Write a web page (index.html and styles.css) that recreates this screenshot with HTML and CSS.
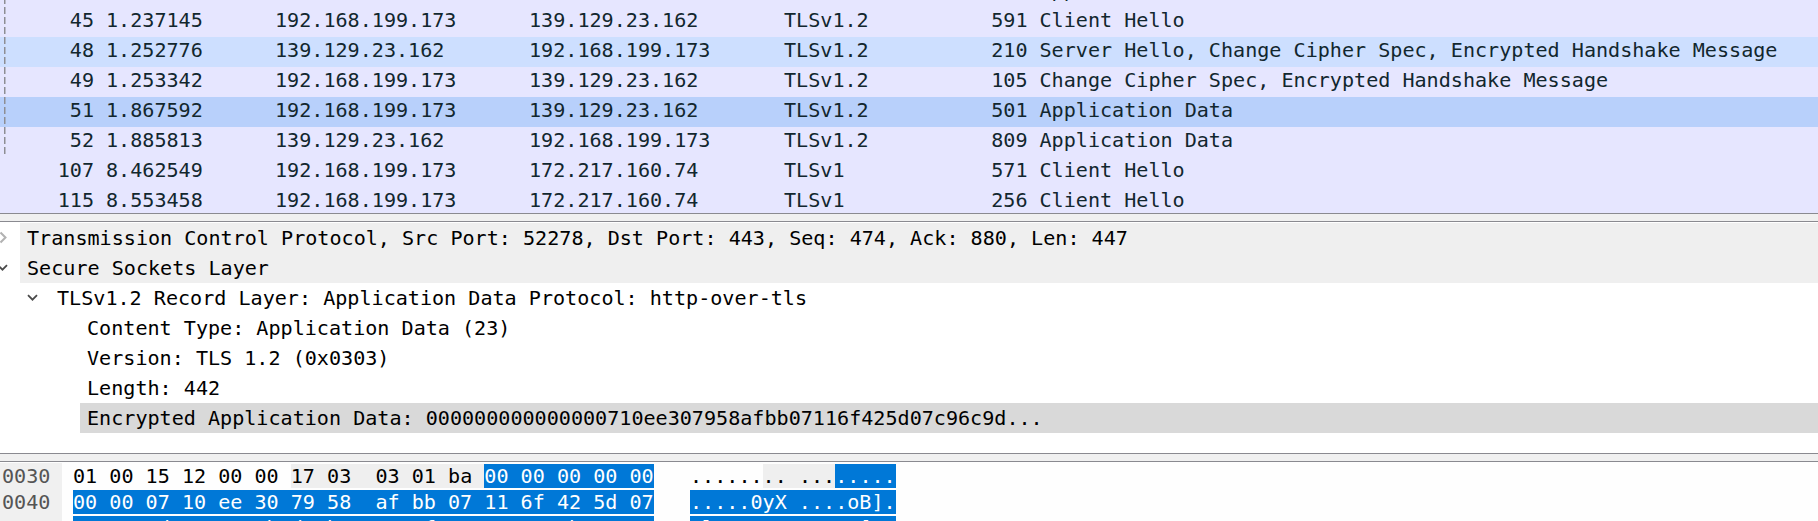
FILE: index.html
```html
<!DOCTYPE html>
<html>
<head>
<meta charset="utf-8">
<link rel="stylesheet" href="styles.css">
</head>
<body>
<div class="app">
  <div class="plist">
    <div class="prow first rel"><span class="c-no">44</span><span class="c-time">1.236617</span><span class="c-src">139.129.23.162</span><span class="c-dst">192.168.199.173</span><span class="c-proto">TLSv1.2</span><span class="c-len">115</span><span class="c-info">Application Data</span></div>
    <div class="prow rel"><span class="c-no">45</span><span class="c-time">1.237145</span><span class="c-src">192.168.199.173</span><span class="c-dst">139.129.23.162</span><span class="c-proto">TLSv1.2</span><span class="c-len">591</span><span class="c-info">Client Hello</span></div>
    <div class="prow rel hover"><span class="c-no">48</span><span class="c-time">1.252776</span><span class="c-src">139.129.23.162</span><span class="c-dst">192.168.199.173</span><span class="c-proto">TLSv1.2</span><span class="c-len">210</span><span class="c-info">Server Hello, Change Cipher Spec, Encrypted Handshake Message</span></div>
    <div class="prow rel"><span class="c-no">49</span><span class="c-time">1.253342</span><span class="c-src">192.168.199.173</span><span class="c-dst">139.129.23.162</span><span class="c-proto">TLSv1.2</span><span class="c-len">105</span><span class="c-info">Change Cipher Spec, Encrypted Handshake Message</span></div>
    <div class="prow rel sel"><span class="c-no">51</span><span class="c-time">1.867592</span><span class="c-src">192.168.199.173</span><span class="c-dst">139.129.23.162</span><span class="c-proto">TLSv1.2</span><span class="c-len">501</span><span class="c-info">Application Data</span></div>
    <div class="prow rel"><span class="c-no">52</span><span class="c-time">1.885813</span><span class="c-src">139.129.23.162</span><span class="c-dst">192.168.199.173</span><span class="c-proto">TLSv1.2</span><span class="c-len">809</span><span class="c-info">Application Data</span></div>
    <div class="prow"><span class="c-no">107</span><span class="c-time">8.462549</span><span class="c-src">192.168.199.173</span><span class="c-dst">172.217.160.74</span><span class="c-proto">TLSv1</span><span class="c-len">571</span><span class="c-info">Client Hello</span></div>
    <div class="prow"><span class="c-no">115</span><span class="c-time">8.553458</span><span class="c-src">192.168.199.173</span><span class="c-dst">172.217.160.74</span><span class="c-proto">TLSv1</span><span class="c-len">256</span><span class="c-info">Client Hello</span></div>
  </div>
  <div class="split"></div>
  <div class="details">
    <div class="trow shade">
      <span class="tog"><svg class="chev-r" width="8" height="13" viewBox="0 0 8 13"><path d="M1.5 1.5 L6.5 6.5 L1.5 11.5" fill="none" stroke="#b2b2b2" stroke-width="2"/></svg></span>
      <span class="lbl">Transmission Control Protocol, Src Port: 52278, Dst Port: 443, Seq: 474, Ack: 880, Len: 447</span>
    </div>
    <div class="trow shade">
      <span class="tog"><svg class="chev-d" width="11" height="7" viewBox="0 0 11 7"><path d="M1 1.2 L5.5 5.7 L10 1.2" fill="none" stroke="#4a4a4a" stroke-width="1.8"/></svg></span>
      <span class="lbl">Secure Sockets Layer</span>
    </div>
    <div class="trow lv1">
      <span class="tog"><svg class="chev-d" width="11" height="7" viewBox="0 0 11 7"><path d="M1 1.2 L5.5 5.7 L10 1.2" fill="none" stroke="#4a4a4a" stroke-width="1.8"/></svg></span>
      <span class="lbl">TLSv1.2 Record Layer: Application Data Protocol: http-over-tls</span>
    </div>
    <div class="trow lv2"><span class="tog"></span><span class="lbl">Content Type: Application Data (23)</span></div>
    <div class="trow lv2"><span class="tog"></span><span class="lbl">Version: TLS 1.2 (0x0303)</span></div>
    <div class="trow lv2"><span class="tog"></span><span class="lbl">Length: 442</span></div>
    <div class="trow lv2 cur"><span class="tog"></span><span class="lbl">Encrypted Application Data: 000000000000000710ee307958afbb07116f425d07c96c9d...</span></div>
  </div>
  <div class="split"></div>
  <div class="hex">
    <div class="hrow"><span class="off">0030</span><span class="bytes">01 00 15 12 00 00 <span class="hl-g">17 03  03 01 ba </span><span class="hl-b">00 00 00 00 00</span>   ......<span class="hl-g">.. ...</span><span class="hl-b">.....</span></span></div>
    <div class="hrow"><span class="off">0040</span><span class="bytes"><span class="hl-b">00 00 07 10 ee 30 79 58  af bb 07 11 6f 42 5d 07</span>   <span class="hl-b">.....0yX ....oB].</span></span></div>
    <div class="hrow"><span class="off">0050</span><span class="bytes"><span class="hl-b">c9 6c 9d 4e 21 8b d3 b6  0a 1f 77 c4 9e 5b 2a 31</span>   <span class="hl-b">.l.N!... ..w..[*1</span></span></div>
  </div>
</div>
</body>
</html>
```

FILE: styles.css
```css
html, body {
  margin: 0;
  padding: 0;
}
body {
  width: 1818px;
  height: 521px;
  overflow: hidden;
  background: #ffffff;
  font-family: "DejaVu Sans Mono", "Liberation Mono", monospace;
  font-size: 20.1px;
  color: #000000;
}
.app {
  display: flex;
  flex-direction: column;
  height: 521px;
}

/* packet list */
.plist {
  flex: none;
  height: 213px;
  overflow: hidden;
  background: #e6e6ff;
  color: #12272e;
}
.prow {
  display: flex;
  height: 30px;
  line-height: 27px;
  white-space: pre;
}
.prow.first {
  margin-top: -23.3px;
}
.prow.hover {
  background: #cddfff;
}
.prow.sel {
  background: #b8d0fb;
}
.prow span {
  flex: none;
}
.c-no {
  width: 94px;
  text-align: right;
}
.prow.rel .c-no {
  background: repeating-linear-gradient(to bottom, #8e8e94 0 7px, transparent 7px 10px) 4px 0 / 1.5px 100% no-repeat;
}
.c-time {
  width: 169px;
  margin-left: 12px;
}
.c-src {
  width: 254px;
}
.c-dst {
  width: 255px;
}
.c-proto {
  width: 171px;
}
.c-len {
  width: 72.5px;
  text-align: right;
}
.c-info {
  margin-left: 12px;
}

/* splitter */
.split {
  flex: none;
  height: 7px;
  background: #f0f0f0;
  border-top: 1px solid #8a8a90;
  border-bottom: 1px solid #8a8a90;
}

/* details tree */
.details {
  flex: none;
  height: 231px;
  box-sizing: border-box;
  padding-top: 1px;
  overflow: hidden;
  background: #ffffff;
}
.trow {
  display: flex;
  height: 30px;
  line-height: 30px;
  white-space: pre;
}
.trow.lv1 {
  padding-left: 30px;
}
.trow.lv2 {
  padding-left: 60px;
}
.tog {
  flex: none;
  width: 20px;
  display: flex;
  align-items: center;
}
.chev-d {
  flex: none;
  margin-left: -3px;
  margin-top: -1px;
}
.chev-r {
  flex: none;
  margin-left: -1.5px;
  margin-top: -1px;
}
.lbl {
  flex: 1;
  padding-left: 7px;
}
.trow.shade .lbl {
  background: #efefef;
}
.trow.cur .lbl {
  background: #d9d9d9;
}

/* hex */
.hex {
  flex: 1;
  overflow: hidden;
  background: #fefefe;
}
.hrow {
  display: flex;
  height: 26px;
  line-height: 26px;
  white-space: pre;
}
.hrow:first-child {
  margin-top: 0.7px;
}
.off {
  flex: none;
  width: 62px;
  box-sizing: border-box;
  padding-left: 2px;
  background: #f0f0f0;
  color: #555555;
}
.bytes {
  margin-left: 11px;
}
.hl-g {
  background: #efefef;
}
.hl-b {
  background: #0078d7;
  color: #ffffff;
}
```
